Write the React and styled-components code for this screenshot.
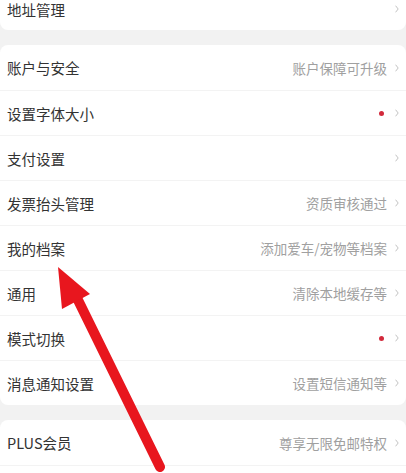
import React from "react";
import styled, { createGlobalStyle } from "styled-components";

const Global = createGlobalStyle`
  html, body { margin: 0; padding: 0; background: #f2f2f2; }
  body { font-family: "Noto Sans CJK SC", "Noto Sans", sans-serif; overflow: hidden; }
`;

const Page = styled.div`
  position: relative;
  width: 406px;
  height: 473px;
  overflow: hidden;
  background: #f2f2f2;
`;

const Scroller = styled.div`
  display: flex;
  flex-direction: column;
  gap: 15px;
  margin-top: -12px;
`;

const Card = styled.div`
  background: #fff;
  border-radius: 8px;
  display: flex;
  flex-direction: column;
`;

const Row = styled.div`
  height: ${(p) => p.$h || 45}px;
  display: flex;
  align-items: center;
  padding: 0 7px 0 7px;
  box-sizing: border-box;
  border-top: ${(p) => (p.$first ? "none" : "1px solid #f3f3f3")};
`;

const Title = styled.span`
  flex: 1;
  font-size: 14.5px;
  color: #333;
`;

const Hint = styled.span`
  font-size: 13.5px;
  color: #a0a0a0;
  margin-right: 8px;
`;

const Dot = styled.span`
  width: 5px;
  height: 5px;
  border-radius: 50%;
  background: #d22a3c;
  margin-right: 11px;
`;

const Chevron = () => (
  <svg width="4" height="8" viewBox="0 0 4 8" style={{ flex: "none" }}>
    <path d="M0.8 1 L3.2 4 L0.8 7" fill="none" stroke="#c2c2c2" strokeWidth="1" strokeLinecap="round" />
  </svg>
);

const Overlay = styled.svg`
  position: absolute;
  left: 0;
  top: 0;
  pointer-events: none;
`;

const Item = ({ title, hint, dot, first, h }) => (
  <Row $first={first} $h={h}>
    <Title>{title}</Title>
    {hint && <Hint>{hint}</Hint>}
    {dot && <Dot />}
    <Chevron />
  </Row>
);

const main = [
  { title: "账户与安全", hint: "账户保障可升级" },
  { title: "设置字体大小", dot: true },
  { title: "支付设置" },
  { title: "发票抬头管理", hint: "资质审核通过" },
  { title: "我的档案", hint: "添加爱车/宠物等档案" },
  { title: "通用", hint: "清除本地缓存等" },
  { title: "模式切换", dot: true },
  { title: "消息通知设置", hint: "设置短信通知等" },
];

export default function App() {
  return (
    <Page>
      <Global />
      <Scroller>
        <Card>
          <Item title="地址管理" first h={42} />
        </Card>
        <Card>
          {main.map((m, i) => (
            <Item key={m.title} {...m} first={i === 0} />
          ))}
        </Card>
        <Card>
          <Item title="PLUS会员" hint="尊享无限免邮特权" first />
          <Item title="" />
        </Card>
      </Scroller>
      <Overlay width="406" height="473" viewBox="0 0 406 473">
        <line x1="77" y1="298" x2="160" y2="467" stroke="#e8161e" strokeWidth="10" strokeLinecap="round" />
        <polygon points="58,267 90,294 62,309" fill="#e8161e" />
      </Overlay>
    </Page>
  );
}
